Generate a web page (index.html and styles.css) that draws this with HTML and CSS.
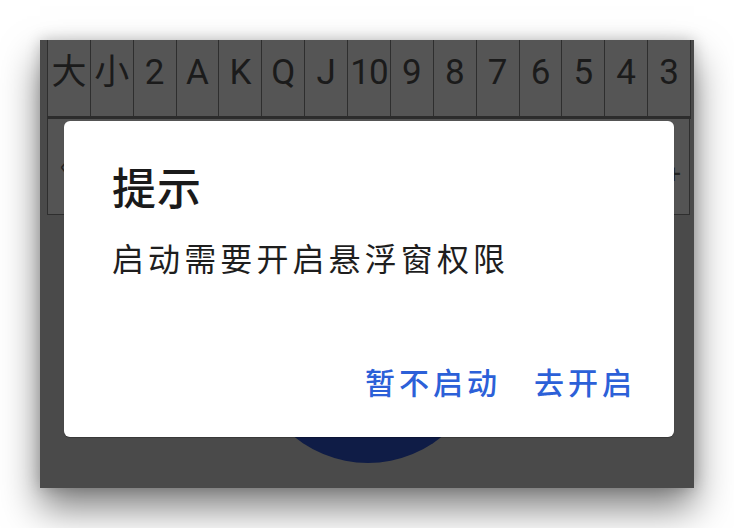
FILE: index.html
```html
<!DOCTYPE html>
<html lang="zh">
<head>
<meta charset="utf-8">
<title>提示</title>
<link rel="stylesheet" href="styles.css">
</head>
<body>
<div class="window">
  <div class="cards">
    <div class="card">大</div>
    <div class="card">小</div>
    <div class="card">2</div>
    <div class="card">A</div>
    <div class="card">K</div>
    <div class="card">Q</div>
    <div class="card">J</div>
    <div class="card narrow">10</div>
    <div class="card">9</div>
    <div class="card">8</div>
    <div class="card">7</div>
    <div class="card">6</div>
    <div class="card">5</div>
    <div class="card">4</div>
    <div class="card">3</div>
  </div>
  <div class="panel">
    <span class="panel-mark">‹</span>
    <span class="panel-plus">+</span>
  </div>
  <div class="circle"></div>
  <div class="dialog">
    <div class="dialog-title">提示</div>
    <div class="dialog-msg">启动需要开启悬浮窗权限</div>
    <div class="dialog-actions">
      <span class="btn">暂不启动</span>
      <span class="btn">去开启</span>
    </div>
  </div>
</div>
</body>
</html>
```

FILE: styles.css
```css
html, body {
  margin: 0;
  padding: 0;
  background: #ffffff;
}
body {
  min-height: 528px;
  box-sizing: border-box;
  padding: 40px 0 0 40px;
  font-family: "Noto Sans CJK SC", "Noto Sans", sans-serif;
}
.window {
  position: relative;
  width: 654px;
  height: 448px;
  background: #4a4a4a;
  box-shadow: 0 20px 36px rgba(0, 0, 0, 0.5), 0 0 14px rgba(0, 0, 0, 0.2);
  padding-left: 7px;
  box-sizing: border-box;
  overflow: hidden;
}
.cards {
  display: grid;
  grid-template-columns: repeat(15, 1fr);
  width: 644px;
  height: 79px;
  border-bottom: 3px solid #2c2c2c;
  border-left: 1px solid #2e2e2e;
  box-sizing: border-box;
}
.card {
  background: #555555;
  border-right: 1px solid #2e2e2e;
  color: #1b1b1b;
  font-family: Roboto, "Noto Sans CJK SC", sans-serif;
  font-size: 35px;
  line-height: 35px;
  padding-top: 15px;
  text-align: center;
  white-space: nowrap;
}
.card.narrow {
  letter-spacing: -1px;
}
.panel {
  display: flex;
  justify-content: space-between;
  align-items: center;
  width: 643px;
  height: 96px;
  background: #545454;
  border: 1px solid #2e2e2e;
  border-top: none;
  box-sizing: border-box;
  padding: 0 8px 0 12px;
  color: #222;
}
.panel-mark {
  font-size: 22px;
  margin-top: -6px;
}
.panel-plus {
  font-family: Roboto, sans-serif;
  font-size: 26px;
  margin-top: 14px;
}
.circle {
  position: absolute;
  left: 211px;
  top: 189px;
  width: 234px;
  height: 234px;
  border-radius: 50%;
  background: #0f1c46;
}
.dialog {
  position: absolute;
  left: 24px;
  top: 81px;
  width: 610px;
  height: 316px;
  background: #ffffff;
  border-radius: 6px;
  box-shadow: 0 1px 1px rgba(0, 0, 0, 0.25);
  box-sizing: border-box;
  padding: 43px 38px 0 48px;
  display: flex;
  flex-direction: column;
}
.dialog-title {
  font-size: 44px;
  line-height: 44px;
  font-weight: 500;
  color: #1a1a1a;
  letter-spacing: 1px;
}
.dialog-msg {
  margin-top: 33px;
  font-size: 32px;
  line-height: 32px;
  letter-spacing: 4.1px;
  color: #1e1e1e;
}
.dialog-actions {
  margin-top: 93px;
  display: flex;
  justify-content: flex-end;
  gap: 33px;
}
.btn {
  font-size: 30px;
  line-height: 30px;
  letter-spacing: 4px;
  font-weight: 500;
  color: #2c60d8;
}
```
